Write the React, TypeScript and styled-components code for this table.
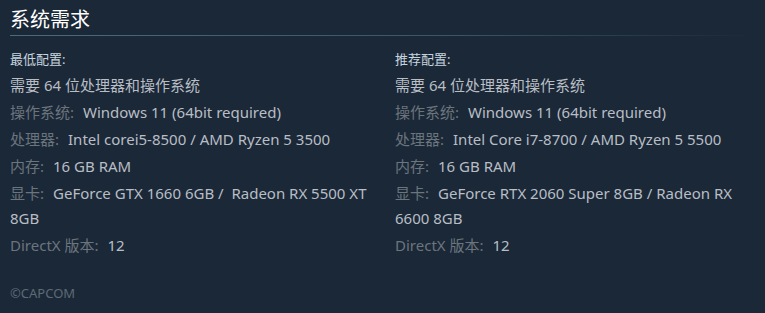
import styled, { createGlobalStyle } from "styled-components";

const GlobalStyle = createGlobalStyle`
  html, body {
    margin: 0;
    padding: 0;
    background: #1b2838;
  }
  body {
    font-family: "Noto Sans", "Noto Sans CJK SC", sans-serif;
  }
  * {
    box-sizing: border-box;
  }
`;

const Page = styled.div`
  width: 765px;
  height: 313px;
  padding: 6px 10px 0 10px;
  background: #1b2838;
`;

const Heading = styled.h2`
  margin: 0;
  font-size: 20px;
  font-weight: 400;
  color: #ffffff;
  line-height: 28px;
  padding-bottom: 2px;
  background-image: linear-gradient(to right, #4a6b7e 0%, #3a5567 60%, rgba(27, 40, 56, 0) 100%);
  background-repeat: no-repeat;
  background-size: 100% 1px;
  background-position: left bottom;
`;

const Columns = styled.div`
  display: grid;
  grid-template-columns: 375px 360px;
  column-gap: 10px;
  margin-top: 13px;
`;

const ColTitle = styled.div`
  font-size: 13px;
  color: #c6d4df;
  line-height: 20px;
  margin-bottom: 4px;
`;

const List = styled.ul`
  list-style: none;
  margin: 0;
  padding: 0;
`;

const Item = styled.li`
  font-size: 15px;
  line-height: 25px;
  color: #b8bec4;
  margin-bottom: 2px;
`;

const Label = styled.span`
  color: #6b757d;
  padding-right: 9px;
`;

const Copyright = styled.div`
  margin-top: 24px;
  font-size: 13px;
  color: #5e6a75;
`;

type Spec = { label?: string; value: string };

const minimum: Spec[] = [
  { value: "需要 64 位处理器和操作系统" },
  { label: "操作系统:", value: "Windows 11 (64bit required)" },
  { label: "处理器:", value: "Intel corei5-8500 / AMD Ryzen 5 3500" },
  { label: "内存:", value: "16 GB RAM" },
  { label: "显卡:", value: "GeForce GTX 1660 6GB / \u00a0Radeon RX 5500 XT 8GB" },
  { label: "DirectX 版本:", value: "12" },
];

const recommended: Spec[] = [
  { value: "需要 64 位处理器和操作系统" },
  { label: "操作系统:", value: "Windows 11 (64bit required)" },
  { label: "处理器:", value: "Intel Core i7-8700 / AMD Ryzen 5 5500" },
  { label: "内存:", value: "16 GB RAM" },
  { label: "显卡:", value: "GeForce RTX 2060 Super 8GB / Radeon RX 6600 8GB" },
  { label: "DirectX 版本:", value: "12" },
];

const ReqColumn = ({ title, specs }: { title: string; specs: Spec[] }) => (
  <div>
    <ColTitle>{title}</ColTitle>
    <List>
      {specs.map((s, i) => (
        <Item key={i}>
          {s.label && <Label>{s.label}</Label>}
          {s.value}
        </Item>
      ))}
    </List>
  </div>
);

export default function App() {
  return (
    <>
      <GlobalStyle />
      <Page>
        <Heading>系统需求</Heading>
        <Columns>
          <ReqColumn title="最低配置:" specs={minimum} />
          <ReqColumn title="推荐配置:" specs={recommended} />
        </Columns>
        <Copyright>©CAPCOM</Copyright>
      </Page>
    </>
  );
}
